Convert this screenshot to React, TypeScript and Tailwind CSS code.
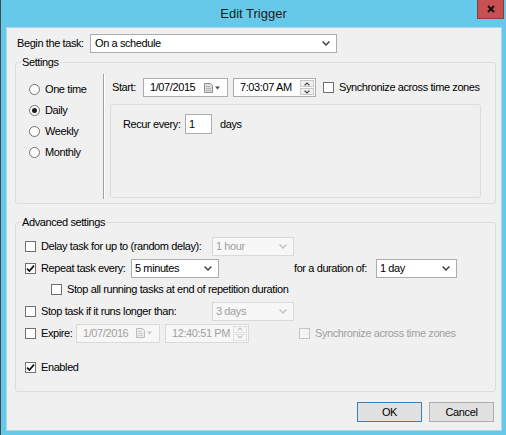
import React from "react";
import clsx from "clsx";

type FieldProps = { value: string; disabled?: boolean; className?: string };
type CheckProps = {
  label: string;
  checked?: boolean;
  disabled?: boolean;
  className?: string;
};

const Chevron = ({ disabled }: { disabled?: boolean }) => (
  <svg width="8" height="5" viewBox="0 0 8 5" className="shrink-0">
    <path
      d="M0.6 0.6 L4 4 L7.4 0.6"
      fill="none"
      stroke={disabled ? "#c2c2c2" : "#3a3a3a"}
      strokeWidth="1.4"
    />
  </svg>
);

const Combo = ({ value, disabled, className }: FieldProps) => (
  <div
    className={clsx(
      "h-[19px] flex items-center justify-between pl-[3px] pr-[6px] border",
      disabled
        ? "bg-[#f7f7f7] border-[#d9d9d9] text-[#a0a0a0]"
        : "bg-white border-[#abadb3]",
      className
    )}
  >
    <span>{value}</span>
    <Chevron disabled={disabled} />
  </div>
);

// little page glyph + drop arrow used by the date fields
const CalendarGlyph = ({ disabled }: { disabled?: boolean }) => (
  <svg width="17" height="10" viewBox="0 0 17 10" className="shrink-0">
    <path
      d="M0.5 0.5 H6.5 L8.5 2.5 V9.5 H0.5 Z"
      fill={disabled ? "#ececec" : "#dedede"}
      stroke={disabled ? "#bdbdbd" : "#8c8c8c"}
    />
    <path d="M2 3.5 H6 M2 5.5 H7 M2 7.5 H7" stroke={disabled ? "#d0d0d0" : "#b0b0b0"} />
    <path d="M11 3.5 H16 L13.5 6.5 Z" fill={disabled ? "#c4c4c4" : "#4a4a4a"} />
  </svg>
);

const DatePicker = ({ value, disabled, className }: FieldProps) => (
  <div
    className={clsx(
      "h-[19px] flex items-center justify-between pl-[6px] pr-[6px] border",
      disabled
        ? "bg-[#f7f7f7] border-[#d9d9d9] text-[#a0a0a0]"
        : "bg-white border-[#abadb3]",
      className
    )}
  >
    <span>{value}</span>
    <CalendarGlyph disabled={disabled} />
  </div>
);

const SpinArrow = ({ up, disabled }: { up?: boolean; disabled?: boolean }) => (
  <svg width="6" height="4" viewBox="0 0 6 4">
    <path
      d={up ? "M0.6 3.4 L3 1 L5.4 3.4" : "M0.6 0.6 L3 3 L5.4 0.6"}
      fill="none"
      stroke={disabled ? "#c2c2c2" : "#404040"}
      strokeWidth="1.2"
    />
  </svg>
);

const TimePicker = ({ value, disabled, className }: FieldProps) => (
  <div
    className={clsx(
      "h-[19px] flex items-stretch border",
      disabled
        ? "bg-[#f7f7f7] border-[#d9d9d9] text-[#a0a0a0]"
        : "bg-white border-[#abadb3]",
      className
    )}
  >
    <span className="flex-1 flex items-center pl-[6px]">{value}</span>
    <div className="w-[16px] flex flex-col gap-px p-px">
      <span
        className={clsx(
          "flex-1 flex items-center justify-center border",
          disabled ? "border-[#e0e0e0] bg-[#f7f7f7]" : "border-[#c8c8c8] bg-[#f0f0f0]"
        )}
      >
        <SpinArrow up disabled={disabled} />
      </span>
      <span
        className={clsx(
          "flex-1 flex items-center justify-center border",
          disabled ? "border-[#e0e0e0] bg-[#f7f7f7]" : "border-[#c8c8c8] bg-[#f0f0f0]"
        )}
      >
        <SpinArrow disabled={disabled} />
      </span>
    </div>
  </div>
);

const Check = ({ label, checked, disabled, className }: CheckProps) => (
  <label
    className={clsx(
      "flex items-center gap-[5px] shrink-0",
      disabled && "text-[#a0a0a0]",
      className
    )}
  >
    <span
      className={clsx(
        "w-[11px] h-[11px] shrink-0 border flex items-center justify-center",
        disabled ? "border-[#c4c4c4] bg-[#f4f4f4]" : "border-[#707070] bg-white"
      )}
    >
      {checked && (
        <svg width="9" height="9" viewBox="0 0 9 9">
          <path
            d="M1 4.6 L3.4 7 L8 1.6"
            fill="none"
            stroke="#111"
            strokeWidth="1.7"
          />
        </svg>
      )}
    </span>
    <span className="whitespace-nowrap">{label}</span>
  </label>
);

const Radio = ({ label, checked }: { label: string; checked?: boolean }) => (
  <div className="h-[21px] flex items-center gap-[5px]">
    <span className="w-[11px] h-[11px] rounded-full border border-[#707070] bg-white flex items-center justify-center">
      {checked && <span className="w-[5px] h-[5px] rounded-full bg-[#1c1c1c]" />}
    </span>
    <span>{label}</span>
  </div>
);

const schedules = ["One time", "Daily", "Weekly", "Monthly"];

export default function App() {
  return (
    <div className="w-[506px] h-[435px] bg-[#66c9ea] border-l border-[#3c4a52] flex flex-col font-['Liberation_Sans',Arial,sans-serif] text-[11px] tracking-[-0.4px] text-black">
      {/* title bar */}
      <div className="h-[28px] relative flex items-center justify-center shrink-0">
        <span className="text-[13px] tracking-normal text-[#1b1b1b]">Edit Trigger</span>
        <button className="absolute right-[2px] top-0 w-[27px] h-[19px] bg-[#c75050] border border-t-0 border-[#8e3b3b] flex items-center justify-center">
          <svg width="8" height="8" viewBox="0 0 8 8">
            <path d="M1 1 L7 7 M7 1 L1 7" stroke="#111" strokeWidth="2" />
          </svg>
        </button>
      </div>

      <div className="flex-1 ml-[6px] mr-[5px] mb-[5px] bg-[#f0f0f0] shadow-[0_0_0_1px_#a3dcf0] flex flex-col">
        <div className="flex items-center mt-[6px] pl-[10px]">
          <span className="w-[73px]">Begin the task:</span>
          <Combo value="On a schedule" className="w-[247px] pl-[4px]" />
        </div>

        <fieldset className="mt-[2px] ml-[8px] w-[481px] h-[149px] border border-[#dcdcdc] rounded-[3px]">
          <legend className="ml-[5px] px-[1px] leading-[14px]">Settings</legend>
          <div className="flex h-[134px]">
            <div className="w-[87px] pl-[13px] pt-[10px] shrink-0">
              {schedules.map((s) => (
                <Radio key={s} label={s} checked={s === "Daily"} />
              ))}
            </div>
            <div className="mt-[5px] h-[125px] w-px bg-[#a0a0a0]" />
            <div className="mt-[5px] h-[125px] w-px bg-white" />
            <div className="flex flex-col pl-[5px]">
              <div className="flex items-center mt-[9px] h-[19px] pl-[2px]">
                <span className="w-[31px]">Start:</span>
                <DatePicker value="1/07/2015" className="w-[85px]" />
                <TimePicker value="7:03:07 AM" className="w-[83px] ml-[5px]" />
                <Check label="Synchronize across time zones" className="ml-[7px]" />
              </div>
              <div className="mt-[7px] w-[371px] h-[94px] border border-[#dcdcdc] rounded-[3px] flex items-start pt-[9px] pl-[12px]">
                <div className="flex items-center h-[20px]">
                  <span className="w-[62px]">Recur every:</span>
                  <div className="w-[27px] h-[20px] bg-white border border-[#abadb3] pl-[3px] flex items-center">
                    1
                  </div>
                  <span className="ml-[8px]">days</span>
                </div>
              </div>
            </div>
          </div>
        </fieldset>

        <fieldset className="mt-[11px] ml-[8px] w-[481px] h-[177px] border border-[#dcdcdc] rounded-[3px]">
          <legend className="ml-[5px] px-[1px] leading-[14px]">Advanced settings</legend>
          <div className="flex flex-col pl-[9px] pt-[6px]">
            <div className="h-[22px] flex items-center">
              <Check label="Delay task for up to (random delay):" className="w-[187px]" />
              <Combo value="1 hour" disabled className="w-[82px]" />
            </div>
            <div className="h-[22px] flex items-center">
              <Check label="Repeat task every:" checked className="w-[106px]" />
              <Combo value="5 minutes" className="w-[88px]" />
              <span className="ml-[75px] w-[82px]">for a duration of:</span>
              <Combo value="1 day" className="w-[81px]" />
            </div>
            <div className="h-[21px] flex items-center pl-[26px]">
              <Check label="Stop all running tasks at end of repetition duration" />
            </div>
            <div className="h-[22px] flex items-center">
              <Check label="Stop task if it runs longer than:" className="w-[187px]" />
              <Combo value="3 days" disabled className="w-[82px]" />
            </div>
            <div className="h-[22px] flex items-center">
              <Check label="Expire:" className="w-[51px]" />
              <DatePicker value="1/07/2016" disabled className="w-[84px]" />
              <TimePicker value="12:40:51 PM" disabled className="w-[84px] ml-[5px]" />
              <Check label="Synchronize across time zones" disabled className="ml-[50px]" />
            </div>
            <div className="h-[22px] mt-[12px] flex items-center">
              <Check label="Enabled" checked />
            </div>
          </div>
        </fieldset>

        <div className="mt-[10px] flex justify-end gap-[7px] pr-[7px]">
          <button className="w-[65px] h-[20px] bg-[#e1e1e1] border border-[#3c7fb1]">OK</button>
          <button className="w-[65px] h-[20px] bg-[#e1e1e1] border border-[#adadad]">Cancel</button>
        </div>
      </div>
    </div>
  );
}
